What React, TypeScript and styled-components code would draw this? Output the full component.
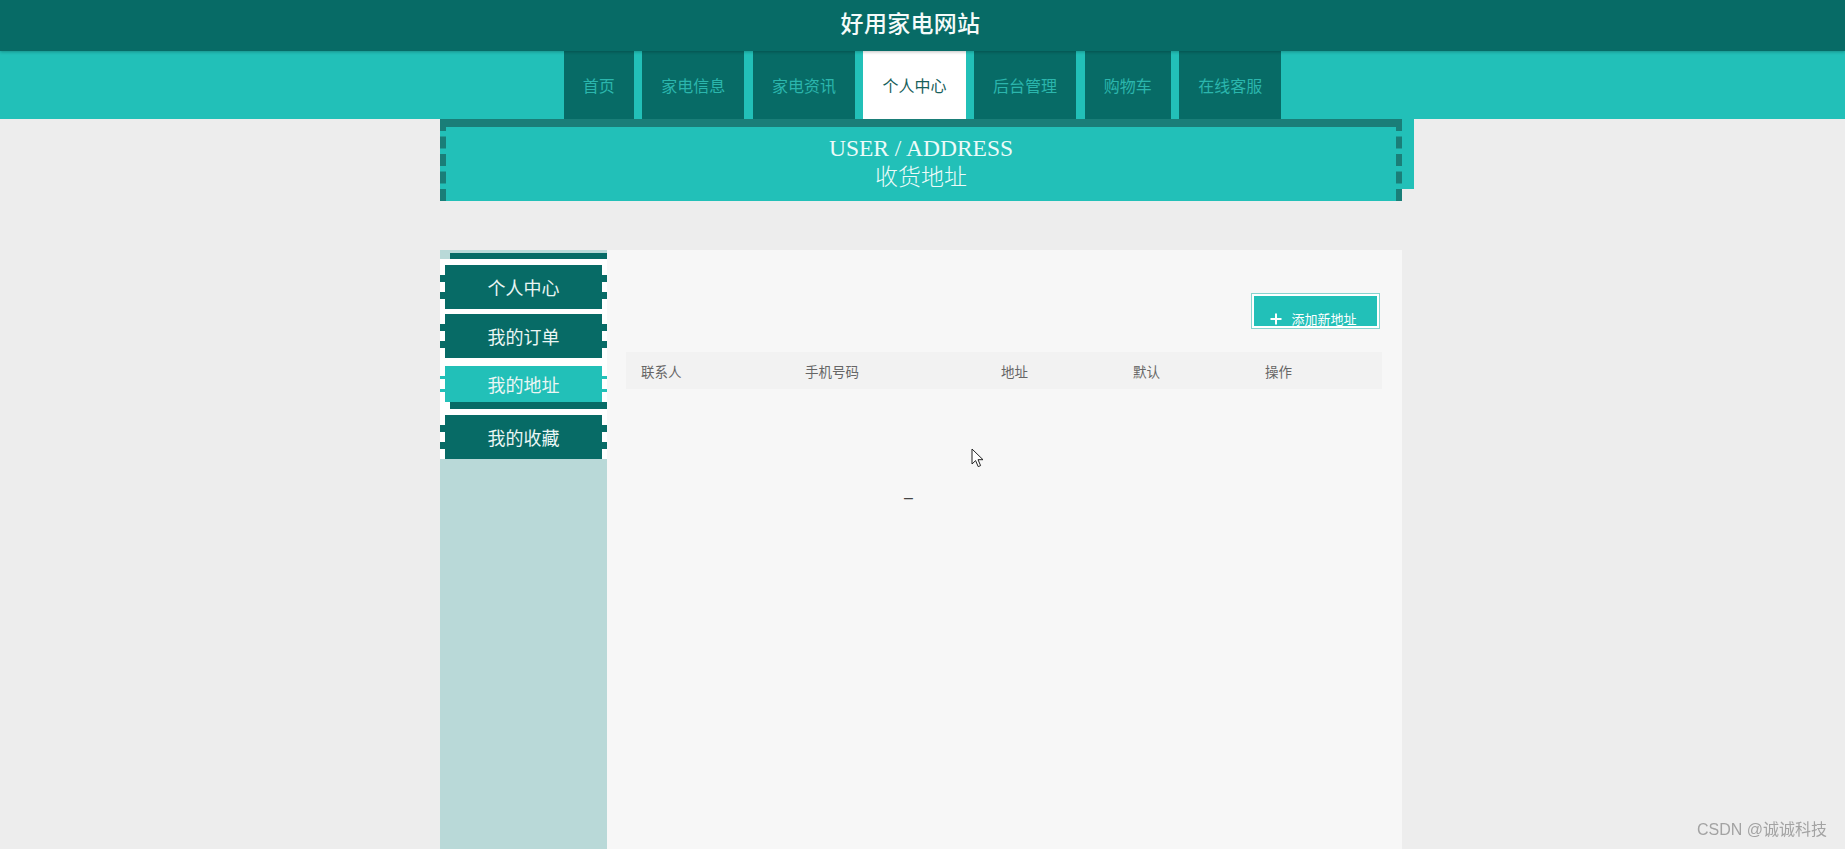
import React from 'react';
import styled, { createGlobalStyle } from 'styled-components';

const DARK = '#076b66';
const LIGHT = '#22c0b8';

const GlobalStyle = createGlobalStyle`
  html, body {
    margin: 0;
    padding: 0;
    overflow: hidden;
  }
  body {
    background: #ededed;
    font-family: "Noto Sans CJK SC", "Liberation Sans", sans-serif;
  }
`;

const navItems = ['首页', '家电信息', '家电资讯', '个人中心', '后台管理', '购物车', '在线客服'];
const menuItems = ['个人中心', '我的订单', '我的地址', '我的收藏'];
const columns = ['联系人', '手机号码', '地址', '默认', '操作'];

export default function App() {
  return (
    <Page>
      <GlobalStyle />
      <TopBar>
        <SiteTitle>好用家电网站</SiteTitle>
      </TopBar>
      <NavBar>
        {navItems.map((item) => (
          <NavItem key={item} $active={item === '个人中心'}>
            {item}
          </NavItem>
        ))}
      </NavBar>

      <Container>
        <Banner>
          <BannerEn>USER / ADDRESS</BannerEn>
          <BannerCn>收货地址</BannerCn>
        </Banner>

        <Panel>
          <Sidebar>
            <Strip $height={6} />
            <Menu>
              {menuItems.map((item) =>
                item === '我的地址' ? (
                  <React.Fragment key={item}>
                    <MenuItem $active>{item}</MenuItem>
                    <Strip $height={7} />
                  </React.Fragment>
                ) : (
                  <MenuItem key={item}>{item}</MenuItem>
                )
              )}
            </Menu>
          </Sidebar>

          <Main>
            <Toolbar>
              <AddButton>
                <svg width="12" height="12" viewBox="0 0 12 12">
                  <path d="M6 0.5V11.5M0.5 6H11.5" stroke="#fff" strokeWidth="2" />
                </svg>
                <span>添加新地址</span>
              </AddButton>
            </Toolbar>
            <TableHead>
              {columns.map((c) => (
                <HeadCell key={c}>{c}</HeadCell>
              ))}
            </TableHead>
            <EmptyRow>–</EmptyRow>
            <Cursor width="13" height="20" viewBox="0 0 13 20">
              <path
                d="M1 1L1 16L4.6 12.6L7.2 18.6L9.6 17.6L7 11.7L12 11.7Z"
                fill="#fff"
                stroke="#222"
                strokeWidth="1"
                strokeLinejoin="round"
              />
            </Cursor>
          </Main>
        </Panel>
      </Container>

      <Watermark>CSDN @诚诚科技</Watermark>
    </Page>
  );
}

const Page = styled.div`
  width: 100%;
  height: 849px;
`;

const TopBar = styled.header`
  height: 51px;
  box-sizing: border-box;
  background: ${DARK};
  display: flex;
  align-items: center;
  justify-content: center;
  padding: 0 24px 8px 0;
  box-shadow: 0 1px 3px rgba(0, 0, 0, 0.25);
  position: relative;
  z-index: 2;
`;

const SiteTitle = styled.h1`
  margin: 0;
  font-size: 23px;
  font-weight: 500;
  color: #f4fbfa;
  letter-spacing: 0.3px;
`;

const NavBar = styled.nav`
  height: 68px;
  background: ${LIGHT};
  display: flex;
  justify-content: center;
  gap: 8.6px;
`;

const NavItem = styled.a<{ $active?: boolean }>`
  padding: 0 19px;
  line-height: 68px;
  font-size: 16px;
  background: ${(p) => (p.$active ? '#ffffff' : DARK)};
  color: ${(p) => (p.$active ? '#17605b' : '#2bb6ad')};
  cursor: pointer;
`;

const Container = styled.div`
  width: 962px;
  margin-left: calc(50% - 482.5px);
`;

const Banner = styled.div`
  height: 82px;
  box-sizing: border-box;
  border-top: 8px solid #1a7e78;
  border-left: 6px dashed #1a7e78;
  border-right: 6px dashed #1a7e78;
  background: ${LIGHT};
  box-shadow: 18px -6px 0 -6px ${LIGHT};
  text-align: center;
  color: #ecfbf9;
  padding-top: 6px;
`;

const BannerEn = styled.div`
  font-family: "Liberation Serif", "Noto Sans CJK SC", serif;
  font-size: 23.5px;
  line-height: 30px;
`;

const BannerCn = styled.div`
  font-family: "Liberation Serif", "Noto Sans CJK SC", serif;
  font-size: 23px;
  font-weight: 300;
  line-height: 30px;
`;

const Panel = styled.div`
  margin-top: 49px;
  height: 599px;
  display: flex;
`;

const Sidebar = styled.aside`
  width: 167px;
  flex-shrink: 0;
  background: #b9d9d8;
  padding-top: 3px;
  box-sizing: border-box;
`;

const Strip = styled.div<{ $height: number }>`
  height: ${(p) => p.$height}px;
  margin-left: 10px;
  background: ${DARK};
`;

const Menu = styled.ul`
  list-style: none;
  margin: 0;
  padding: 6px 0 0;
  background: #ffffff;
  display: flex;
  flex-direction: column;
`;

const MenuItem = styled.li<{ $active?: boolean }>`
  height: ${(p) => (p.$active ? 36 : 44)}px;
  margin-top: ${(p) => (p.$active ? 8 : 5)}px;
  border-left: 5px dashed #ffffff;
  border-right: 5px dashed #ffffff;
  background: ${(p) => (p.$active ? LIGHT : DARK)};
  color: #eaf6f4;
  font-size: 18px;
  display: flex;
  align-items: center;
  justify-content: center;
  cursor: pointer;

  &:first-child {
    margin-top: 0;
  }

  & + ${Strip} + & {
    margin-top: 6px;
  }
`;

const Main = styled.main`
  flex: 1;
  background: #f7f7f7;
  padding: 43px 20px 0 19px;
  position: relative;
`;

const Toolbar = styled.div`
  display: flex;
  justify-content: flex-end;
  padding-right: 2px;
`;

const AddButton = styled.button`
  width: 129px;
  height: 36px;
  box-sizing: border-box;
  border: 1px solid #86d4ce;
  box-shadow: inset 0 0 0 2px #ffffff;
  background: ${LIGHT};
  color: #ffffff;
  font-family: "Noto Sans CJK SC", sans-serif;
  font-size: 13px;
  display: flex;
  align-items: center;
  justify-content: center;
  gap: 9px;
  padding: 15px 4px 0 0;
  cursor: pointer;
`;

const TableHead = styled.div`
  margin-top: 23px;
  height: 37px;
  background: #f2f2f2;
  display: grid;
  grid-template-columns: 164px 196px 132px 132px 1fr;
  align-items: center;
  padding-left: 15px;
`;

const HeadCell = styled.div`
  font-size: 13.5px;
  color: #666666;
`;

const EmptyRow = styled.div`
  margin-top: 99px;
  padding-left: 278px;
  font-family: "Liberation Sans", sans-serif;
  font-size: 16px;
  line-height: 20px;
  color: #444444;
`;

const Cursor = styled.svg`
  position: absolute;
  left: 364px;
  top: 198px;
`;

const Watermark = styled.div`
  position: fixed;
  right: 18px;
  bottom: 9px;
  font-family: "Liberation Sans", "Noto Sans CJK SC", sans-serif;
  font-size: 16px;
  color: #a3a3a3;
`;
